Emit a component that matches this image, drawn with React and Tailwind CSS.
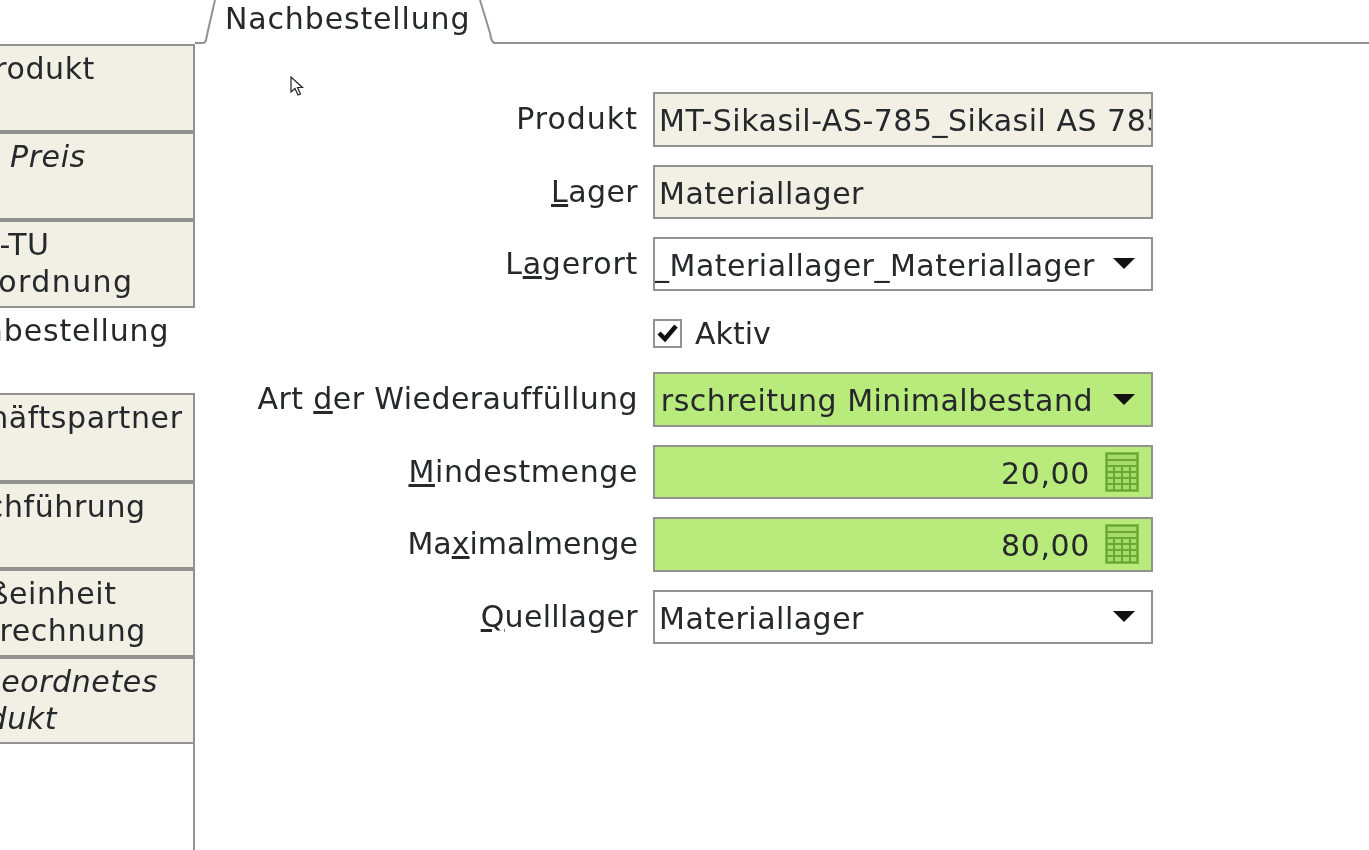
import React from 'react';

const font = { fontFamily: '"DejaVu Sans", sans-serif' };

const SideTab = ({ className = '', children }) => (
  <div className={`border-2 border-l-0 border-[#929290] bg-[#f2efe4] overflow-hidden ${className}`}>
    {children}
  </div>
);

const Line = ({ className = '', children }) => (
  <div className={`whitespace-nowrap h-[37px] leading-[37px] tracking-[0.6px] ${className}`}>{children}</div>
);

const Caret = () => (
  <svg width="22" height="11" viewBox="0 0 22 11" className="shrink-0 mt-[-3px]">
    <path d="M0 0H22L11 11Z" fill="#111" />
  </svg>
);

const Calc = () => (
  <svg width="34" height="40" viewBox="0 0 34 40" className="shrink-0 mt-[-3px]">
    <rect x="1.5" y="1.5" width="31" height="37" fill="#a6dc6c" stroke="#6aa832" strokeWidth="2.5" />
    <path d="M2 8H32M2 14H32M2 20H32M2 26H32M2 32H32M9 14V38M17 14V38M25 14V38" stroke="#6aa832" strokeWidth="2" fill="none" />
  </svg>
);

const Label = ({ className = '', children }) => (
  <div className={`flex items-center justify-end pb-[2px] whitespace-nowrap ${className}`}>{children}</div>
);

const Field = ({ className = '', children }) => (
  <div className={`border-[2px] border-[#929290] flex items-center overflow-hidden pl-[4px] pt-[2px] tracking-[0.5px] ${className}`}>
    {children}
  </div>
);

export default function App() {
  return (
    <div className="w-[1369px] h-[850px] bg-white overflow-hidden text-[30px] text-[#26292b] flex flex-col blur-[0.4px]" style={font}>
      <div className="h-[44px] flex shrink-0">
        <div className="w-[205px] shrink-0" />
        <div className="relative w-[288px] shrink-0 pl-[20px] leading-[38px] tracking-[0.85px]">
          <svg className="absolute left-[-10px] top-0" width="308" height="44" viewBox="0 0 308 44" fill="none">
            <path d="M0 43H8C11 43 11 40 12 35L20 0M285 0L295 33C296 40 297 43 300 43H308" stroke="#929290" strokeWidth="2" />
          </svg>
          Nachbestellung
        </div>
        <div className="flex-1 border-b-2 border-[#929290]" />
      </div>

      <div className="flex-1 flex min-h-0">
        <div className="w-[195px] shrink-0 flex flex-col">
          <SideTab className="h-[88px] pt-[4px]"><Line className="ml-[-24px]">Produkt</Line></SideTab>
          <SideTab className="h-[88px] pt-[4px]"><Line className="ml-[10px] italic">Preis</Line></SideTab>
          <SideTab className="h-[88px] pt-[4px]">
            <Line className="ml-[-27px]">M-TU</Line>
            <Line className="ml-[-44px] tracking-[1.4px]">Zuordnung</Line>
          </SideTab>
          <div className="h-[85px] pt-[4px]"><Line className="ml-[-76px] tracking-[0.85px]">Nachbestellung</Line></div>
          <SideTab className="h-[89px] pt-[4px]"><Line className="ml-[-87px]">Geschäftspartner</Line></SideTab>
          <SideTab className="h-[87px] pt-[4px]"><Line className="ml-[-54px]">Buchführung</Line></SideTab>
          <SideTab className="h-[88px] pt-[4px]">
            <Line className="ml-[-56px]">Maßeinheit</Line>
            <Line className="ml-[-53px]">Umrechnung</Line>
          </SideTab>
          <SideTab className="h-[87px] pt-[4px] italic">
            <Line className="ml-[-105px]">Untergeordnetes</Line>
            <Line className="ml-[-63px]">Produkt</Line>
          </SideTab>
          <div className="flex-1 border-r-2 border-[#929290]" />
        </div>

        <div className="pt-[48px] pl-[15px] relative flex-1">
          <svg className="absolute left-[95px] top-[32px]" width="14" height="21" viewBox="0 0 14 21">
            <path d="M1 1V16L5 12.500L8 19L10.500 18L7.500 11.500H12.500Z" fill="#fff" stroke="#222" strokeWidth="1.200" />
          </svg>

          <div className="grid grid-cols-[428px_500px] gap-x-[15px] gap-y-[18px] grid-rows-[55px_54px_54px_45px_55px_54px_55px_54px]">
            <Label className="tracking-[1px]">Produkt</Label>
            <Field className="bg-[#f2efe4]"><span className="whitespace-nowrap">MT-Sikasil-AS-785_Sikasil AS 785</span></Field>

            <Label className="tracking-[0.4px]"><span><u>L</u>ager</span></Label>
            <Field className="bg-[#f2efe4]">Materiallager</Field>

            <Label className="tracking-[0.75px]"><span>L<u>a</u>gerort</span></Label>
            <Field className="justify-between pr-[16px]">
              <span className="whitespace-nowrap ml-[-5px]">_Materiallager_Materiallager</span>
              <Caret />
            </Field>

            <div />
            <div className="flex items-center gap-[13px] pt-[3px]">
              <div className="w-[29px] h-[29px] border-2 border-[#929290] flex items-center justify-center">
                <svg width="21" height="18" viewBox="0 0 21 18">
                  <path d="M2 9L8 15L19 2" fill="none" stroke="#111" strokeWidth="4.500" />
                </svg>
              </div>
              Aktiv
            </div>

            <Label className="tracking-[0.42px]"><span>Art <u>d</u>er Wiederauffüllung</span></Label>
            <Field className="bg-[#b8ea7c] pr-[16px] gap-[20px]">
              <div className="flex-1 min-w-0 overflow-hidden flex justify-end">
                <span className="whitespace-nowrap">Unterschreitung Minimalbestand</span>
              </div>
              <Caret />
            </Field>

            <Label className="tracking-[0.6px]"><span><u>M</u>indestmenge</span></Label>
            <Field className="bg-[#b8ea7c] justify-end pr-[12px] gap-[15px] tracking-[0.6px]">20,00<Calc /></Field>

            <Label><span>Ma<u>x</u>imalmenge</span></Label>
            <Field className="bg-[#b8ea7c] justify-end pr-[12px] gap-[15px] tracking-[0.6px]">80,00<Calc /></Field>

            <Label className="tracking-[0.3px]"><span><u>Q</u>uelllager</span></Label>
            <Field className="justify-between pr-[16px]">Materiallager<Caret /></Field>
          </div>
        </div>
      </div>
    </div>
  );
}
